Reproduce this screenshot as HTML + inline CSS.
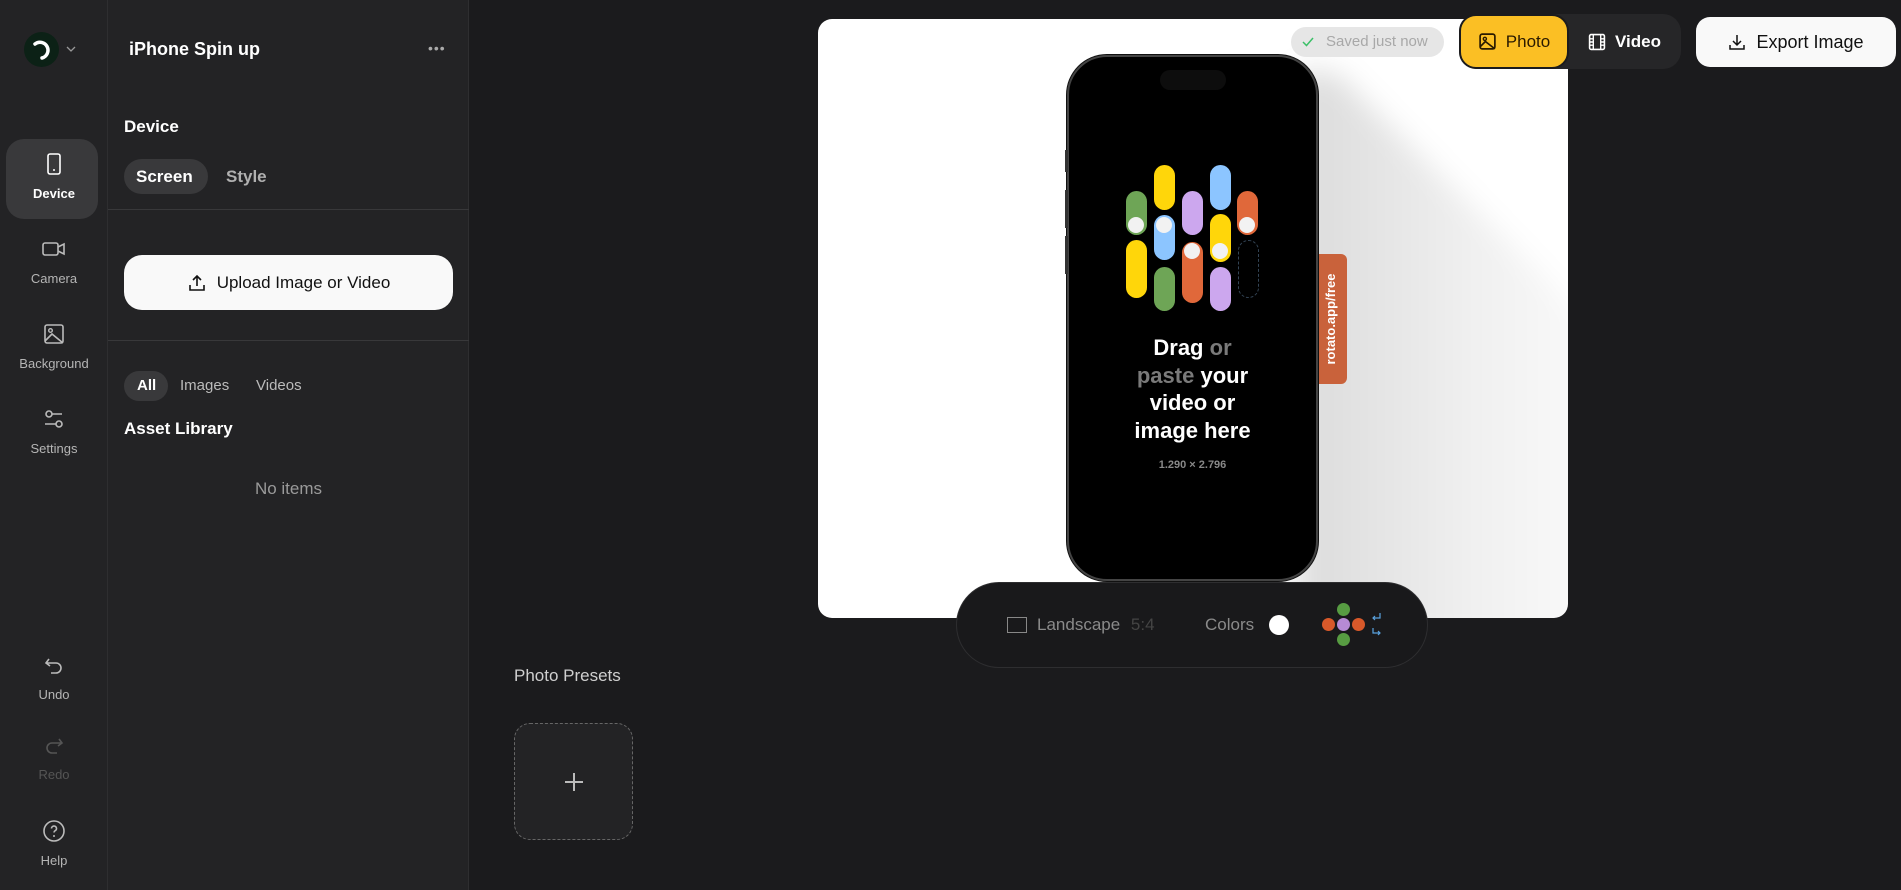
<!DOCTYPE html>
<html><head><meta charset="utf-8"><style>
*{margin:0;padding:0;box-sizing:border-box}
body{width:1901px;height:890px;background:#1b1b1d;font-family:"Liberation Sans",sans-serif;position:relative;overflow:hidden;color:#fff}
.a{position:absolute;white-space:nowrap}
.rail{left:0;top:0;width:108px;height:890px;background:#232325;border-right:1px solid #2e2e30}
.panel{left:108px;top:0;width:361px;height:890px;background:#232325;border-right:1px solid #2e2e30}
.ri{position:absolute;left:0;width:108px;text-align:center;font-size:13px;color:#b5b5b5}
.ri svg{display:block;margin:0 auto}
.pill{position:absolute;border-radius:14px;width:21px}
.dot{position:absolute;width:16px;height:16px;border-radius:50%;background:#f2f2f2}
</style></head><body>
<div class="a rail"></div>
<div class="a panel"></div>
<!-- logo -->
<div class="a" style="left:24px;top:32px;width:35px;height:35px;border-radius:50%;background:#0c2116"></div>
<svg class="a" style="left:24px;top:32px" width="35" height="35" viewBox="0 0 35 35"><path d="M11 12 A8 8 0 1 1 18 26" stroke="#fff" stroke-width="3.5" fill="none" stroke-linecap="round"/></svg>
<svg class="a" style="left:66px;top:45px" width="10" height="8" viewBox="0 0 10 8"><path d="M1 2l4 4 4-4" stroke="#999" stroke-width="1.3" fill="none"/></svg>
<!-- rail items -->
<div class="a" style="left:6px;top:139px;width:92px;height:80px;border-radius:18px;background:#39393b"></div>
<div class="ri" style="top:152px;color:#fff;font-weight:bold"><svg width="24" height="24" viewBox="0 0 24 24"><rect x="6" y="2" width="12" height="20" rx="2" stroke="#fff" stroke-width="1.6" fill="none"/><circle cx="12" cy="18" r="1" fill="#fff"/></svg><div style="margin-top:10px">Device</div></div>
<div class="ri" style="top:237px"><svg width="26" height="24" viewBox="0 0 26 24"><rect x="2" y="6" width="15" height="12" rx="2" stroke="#bbb" stroke-width="1.6" fill="none"/><path d="M17 10l6-3v10l-6-3" stroke="#bbb" stroke-width="1.6" fill="none"/></svg><div style="margin-top:10px">Camera</div></div>
<div class="ri" style="top:322px"><svg width="24" height="24" viewBox="0 0 24 24"><rect x="3" y="3" width="18" height="18" rx="2" stroke="#bbb" stroke-width="1.6" fill="none"/><circle cx="8.5" cy="8.5" r="1.8" stroke="#bbb" stroke-width="1.4" fill="none"/><path d="M3 19l7-7 11 9" stroke="#bbb" stroke-width="1.6" fill="none"/></svg><div style="margin-top:10px">Background</div></div>
<div class="ri" style="top:407px"><svg width="24" height="24" viewBox="0 0 24 24"><circle cx="7" cy="7" r="3" stroke="#bbb" stroke-width="1.6" fill="none"/><path d="M10 7h10M3 17h11" stroke="#bbb" stroke-width="1.6"/><circle cx="17" cy="17" r="3" stroke="#bbb" stroke-width="1.6" fill="none"/></svg><div style="margin-top:10px">Settings</div></div>
<div class="ri" style="top:655px"><svg width="22" height="22" viewBox="0 0 22 22"><path d="M6 4L3 8l4 3M3 8h10a5 5 0 0 1 0 10H8" stroke="#bbb" stroke-width="1.6" fill="none"/></svg><div style="margin-top:10px">Undo</div></div>
<div class="ri" style="top:735px;color:#555"><svg width="22" height="22" viewBox="0 0 22 22"><path d="M16 4l3 4-4 3M19 8H9a5 5 0 0 0 0 10h5" stroke="#555" stroke-width="1.6" fill="none"/></svg><div style="margin-top:10px">Redo</div></div>
<div class="ri" style="top:819px"><svg width="24" height="24" viewBox="0 0 24 24"><circle cx="12" cy="12" r="10" stroke="#bbb" stroke-width="1.6" fill="none"/><path d="M9.5 9.5a2.5 2.5 0 1 1 3.5 2.3c-.7.4-1 .9-1 1.7" stroke="#bbb" stroke-width="1.6" fill="none"/><circle cx="12" cy="17" r="1" fill="#bbb"/></svg><div style="margin-top:10px">Help</div></div>
<!-- panel -->
<div class="a" style="left:129px;top:39px;font-size:18px;font-weight:bold">iPhone Spin up</div>
<div class="a" style="left:428px;top:40px;font-size:14px;color:#aaa;letter-spacing:1px">•••</div>
<div class="a" style="left:124px;top:117px;font-size:17px;font-weight:bold">Device</div>
<div class="a" style="left:124px;top:159px;width:84px;height:35px;border-radius:18px;background:#39393b"></div>
<div class="a" style="left:136px;top:167px;font-size:17px;font-weight:bold">Screen</div>
<div class="a" style="left:226px;top:167px;font-size:17px;font-weight:bold;color:#b0b0b0">Style</div>
<div class="a" style="left:108px;top:209px;width:361px;height:1px;background:#38383a"></div>
<div class="a" style="left:124px;top:255px;width:329px;height:55px;border-radius:18px;background:#f9f9f9;color:#111;font-size:17px;display:flex;align-items:center;justify-content:center;gap:10px"><svg width="20" height="20" viewBox="0 0 20 20"><path d="M10 13V3M6 7l4-4 4 4M3 12v5h14v-5" stroke="#111" stroke-width="1.6" fill="none"/></svg>Upload Image or Video</div>
<div class="a" style="left:108px;top:340px;width:361px;height:1px;background:#38383a"></div>
<div class="a" style="left:124px;top:371px;width:44px;height:30px;border-radius:15px;background:#39393b"></div>
<div class="a" style="left:137px;top:377px;font-size:15px;font-weight:bold">All</div>
<div class="a" style="left:180px;top:377px;font-size:15px;color:#bbb">Images</div>
<div class="a" style="left:256px;top:377px;font-size:15px;color:#bbb">Videos</div>
<div class="a" style="left:124px;top:419px;font-size:17px;font-weight:bold">Asset Library</div>
<div class="a" style="left:108px;top:479px;width:361px;text-align:center;font-size:17px;color:#9a9a9a">No items</div>
<!-- canvas -->
<div class="a" style="left:818px;top:19px;width:750px;height:599px;background:#fff;border-radius:14px;overflow:hidden">
  <svg class="a" style="left:0;top:0" width="750" height="599" viewBox="0 0 750 599">
    <defs><filter id="b" x="-50%" y="-50%" width="200%" height="200%"><feGaussianBlur stdDeviation="14"/></filter>
    <linearGradient id="g" x1="0" y1="0" x2="1" y2="0"><stop offset="0" stop-color="#000" stop-opacity="0.14"/><stop offset="0.6" stop-color="#000" stop-opacity="0.06"/><stop offset="1" stop-color="#000" stop-opacity="0.02"/></linearGradient></defs>
    <polygon points="480,50 520,55 770,300 770,620 480,620" fill="url(#g)" filter="url(#b)"/>
  </svg>
</div>
<!-- phone -->
<div class="a" style="left:1067px;top:55px;width:251px;height:526px;border-radius:40px;background:#000;border:2px solid #444;box-shadow:0 0 0 1px #111"></div>
<div class="a" style="left:1160px;top:70px;width:66px;height:20px;border-radius:10px;background:#0d0d0d"></div>
<div class="a" style="left:1065px;top:150px;width:3px;height:22px;background:#333"></div>
<div class="a" style="left:1065px;top:190px;width:3px;height:38px;background:#333"></div>
<div class="a" style="left:1065px;top:236px;width:3px;height:38px;background:#333"></div>
<!-- logo pills -->
<div class="pill" style="left:1126px;top:191px;height:44px;background:#6ea556"></div>
<div class="pill" style="left:1126px;top:240px;height:58px;background:#ffd60a"></div>
<div class="pill" style="left:1154px;top:165px;height:45px;background:#ffd60a"></div>
<div class="pill" style="left:1154px;top:215px;height:45px;background:#8cc5ff"></div>
<div class="pill" style="left:1154px;top:267px;height:44px;background:#6ea556"></div>
<div class="pill" style="left:1182px;top:191px;height:44px;background:#cca7ee"></div>
<div class="pill" style="left:1182px;top:242px;height:61px;background:#e0683a"></div>
<div class="pill" style="left:1210px;top:165px;height:45px;background:#8cc5ff"></div>
<div class="pill" style="left:1210px;top:214px;height:48px;background:#ffd60a"></div>
<div class="pill" style="left:1210px;top:267px;height:44px;background:#cca7ee"></div>
<div class="pill" style="left:1237px;top:191px;height:44px;background:#e0683a"></div>
<div class="pill" style="left:1238px;top:240px;height:58px;border:1px dashed #345"></div>
<div class="dot" style="left:1128px;top:217px"></div>
<div class="dot" style="left:1156px;top:217px"></div>
<div class="dot" style="left:1184px;top:243px"></div>
<div class="dot" style="left:1212px;top:243px"></div>
<div class="dot" style="left:1239px;top:217px"></div>
<div class="a" style="left:1080px;top:334px;width:225px;text-align:center;font-size:22px;font-weight:bold;line-height:27.5px">Drag <span style="color:#7a7a7a">or</span><br><span style="color:#7a7a7a">paste</span> your<br>video or<br>image here</div>
<div class="a" style="left:1080px;top:459px;width:225px;text-align:center;font-size:11px;font-weight:bold;color:#888">1.290 × 2.796</div>
<div class="a" style="left:1319px;top:254px;width:28px;height:130px;background:#c9623b;border-radius:0 6px 6px 0"></div>
<div class="a" style="left:1268px;top:309px;width:130px;height:20px;transform:rotate(-90deg);text-align:center;font-size:13px;font-weight:bold;color:#fff">rotato.app/free</div>
<!-- bottom bar -->
<div class="a" style="left:956px;top:582px;width:472px;height:86px;border-radius:43px;background:#19191b;border:1px solid #2e2e30"></div>
<div class="a" style="left:1007px;top:617px;width:20px;height:16px;border:1.5px solid #888"></div>
<div class="a" style="left:1037px;top:615px;font-size:17px;color:#8a8a8a">Landscape <span style="color:#444;margin-left:6px">5:4</span></div>
<div class="a" style="left:1205px;top:615px;font-size:17px;color:#8a8a8a">Colors</div>
<div class="a" style="left:1269px;top:615px;width:20px;height:20px;border-radius:50%;background:#fff"></div>
<div class="a" style="left:1337px;top:603px;width:13px;height:13px;border-radius:50%;background:#579c42"></div>
<div class="a" style="left:1337px;top:633px;width:13px;height:13px;border-radius:50%;background:#579c42"></div>
<div class="a" style="left:1322px;top:618px;width:13px;height:13px;border-radius:50%;background:#d8592a"></div>
<div class="a" style="left:1352px;top:618px;width:13px;height:13px;border-radius:50%;background:#d8592a"></div>
<div class="a" style="left:1337px;top:618px;width:13px;height:13px;border-radius:50%;background:#b68ad4"></div>
<svg class="a" style="left:1370px;top:611px" width="14" height="28" viewBox="0 0 14 28"><path d="M10 2v5H3M5 5L3 7l2 2M3 17v5h7M8 20l2 2-2 2" stroke="#5aa3e0" stroke-width="1.2" fill="none"/></svg>
<!-- top right -->
<div class="a" style="left:1291px;top:27px;width:153px;height:30px;border-radius:15px;background:#e6e6e6;font-size:15px;color:#a8a8a8;line-height:30px;padding-left:35px">Saved just now</div>
<svg class="a" style="left:1301px;top:35px" width="14" height="14" viewBox="0 0 14 14"><path d="M2 7l3.5 3.5L12 3" stroke="#3cc068" stroke-width="1.5" fill="none"/></svg>
<div class="a" style="left:1459px;top:14px;width:222px;height:55px;border-radius:18px;background:#262628"></div>
<div class="a" style="left:1459px;top:14px;width:110px;height:55px;border-radius:17px;background:#fbbf24;border:2px solid #1b1b1d;color:#2a1a00;font-size:17px;display:flex;align-items:center;justify-content:center;gap:9px"><svg width="19" height="19" viewBox="0 0 18 18"><rect x="2" y="2" width="14" height="14" rx="2" stroke="#2a1a00" stroke-width="1.6" fill="none"/><circle cx="6.5" cy="6.5" r="1.5" stroke="#2a1a00" stroke-width="1.3" fill="none"/><path d="M2 14l5-5 9 7" stroke="#2a1a00" stroke-width="1.6" fill="none"/></svg>Photo</div>
<div class="a" style="left:1588px;top:14px;width:90px;height:55px;color:#fff;font-size:17px;font-weight:bold;display:flex;align-items:center;gap:9px"><svg width="18" height="18" viewBox="0 0 17 17"><rect x="1.5" y="1.5" width="14" height="14" rx="1.5" stroke="#fff" stroke-width="1.5" fill="none"/><path d="M5 1.5v14M12 1.5v14M1.5 5.5h3.5M1.5 8.5h3.5M1.5 11.5h3.5M12 5.5h3.5M12 8.5h3.5M12 11.5h3.5" stroke="#fff" stroke-width="1.3"/></svg>Video</div>
<div class="a" style="left:1696px;top:17px;width:200px;height:50px;border-radius:14px;background:#f9f9f9;color:#111;font-size:18px;display:flex;align-items:center;justify-content:center;gap:10px"><svg width="18" height="18" viewBox="0 0 18 18"><path d="M9 2v10M5 8l4 4 4-4M2 12v4h14v-4" stroke="#111" stroke-width="1.5" fill="none"/></svg>Export Image</div>
<!-- presets -->
<div class="a" style="left:514px;top:666px;font-size:17px;color:#cfcfcf">Photo Presets</div>
<div class="a" style="left:514px;top:723px;width:119px;height:117px;border-radius:16px;border:1.5px dashed #666;background:#232325"></div>
<div class="a" style="left:565px;top:781px;width:18px;height:1.5px;background:#bbb"></div>
<div class="a" style="left:573.3px;top:773px;width:1.5px;height:18px;background:#bbb"></div>
</body></html>
